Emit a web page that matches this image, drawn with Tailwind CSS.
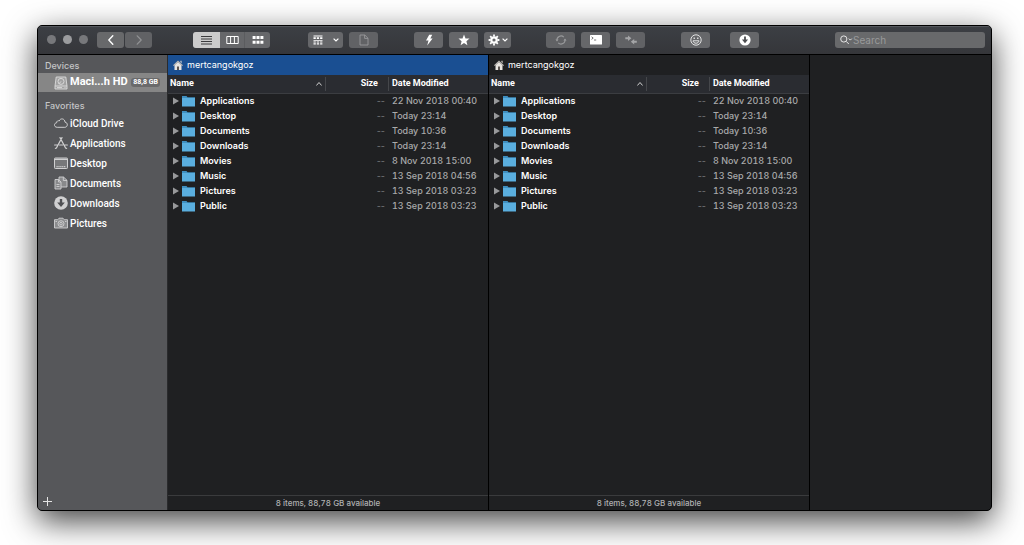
<!DOCTYPE html>
<html lang="en">
<head>
    <meta charset="UTF-8">
    <meta name="viewport" content="width=device-width, initial-scale=1.0">
    <title>mertcangokgoz</title>
    <script src="https://cdn.jsdelivr.net/npm/@tailwindcss/browser@4"></script>
</head>
<body class="flex h-screen overflow-hidden bg-white pt-[25px] pr-8 pb-[34px] pl-[37px] font-['Inter',sans-serif] text-[9px] text-white">
    <div class="flex min-w-0 flex-1 flex-col overflow-hidden rounded-[5px] border border-black bg-[#1f2022] shadow-[0_10px_32px_rgba(0,0,0,0.75)]">

        <!-- Toolbar -->
        <header class="flex h-7 shrink-0 items-center border-t border-[#55585d] bg-linear-to-b from-[#3c3f44] to-[#35363a] pr-1.5 pb-0.5 pl-[9px]">
            <div class="flex gap-[7px]">
                <button aria-label="Close" class="size-[9px] rounded-full bg-[#77787b]"></button>
                <button aria-label="Minimize" class="size-[9px] rounded-full bg-[#9b9c9e]"></button>
                <button aria-label="Zoom" class="size-[9px] rounded-full bg-[#77787b]"></button>
            </div>

            <div class="ml-[9px] flex gap-px">
                <button aria-label="Back" class="flex h-4 w-[27px] items-center justify-center rounded-[3px] bg-[#68696b]">
                    <svg class="size-3" viewBox="0 0 12 12" fill="none" stroke="#fff" stroke-width="1.4" stroke-linecap="round" stroke-linejoin="round"><path d="M7.8 1.8 3.8 6l4 4.2"/></svg>
                </button>
                <button aria-label="Forward" class="flex h-4 w-[27px] items-center justify-center rounded-[3px] bg-[#616265]">
                    <svg class="size-3" viewBox="0 0 12 12" fill="none" stroke="#929395" stroke-width="1.2" stroke-linecap="round" stroke-linejoin="round"><path d="m4.2 1.8 4 4.2-4 4.2"/></svg>
                </button>
            </div>

            <!-- View modes -->
            <div class="ml-[41px] flex h-4 overflow-hidden rounded-[3px] bg-[#66676a]">
                <button aria-label="List view" class="flex w-[27px] items-center justify-center bg-[#cbcbcb]">
                    <svg class="h-3 w-[13px]" viewBox="0 0 13 12" stroke="#3b3b3d" stroke-width="1"><path d="M1 2.5h11M1 5h11M1 7.5h11M1 10h11"/></svg>
                </button>
                <button aria-label="Column view" class="flex w-[25px] items-center justify-center border-r border-[#5b5c5f]">
                    <svg class="h-3 w-[13px]" viewBox="0 0 13 12" fill="none" stroke="#fff" stroke-width="1"><path d="M.8 2.5h11.4v7H.8zM4.6 2.5v7M8.4 2.5v7"/></svg>
                </button>
                <button aria-label="Icon view" class="flex w-[25px] items-center justify-center">
                    <svg class="h-3 w-3" viewBox="0 0 12 12" fill="#fff"><path d="M.6 2h3v3h-3zM4.5 2h3v3h-3zM8.4 2h3v3h-3zM.6 6.8h3v3h-3zM4.5 6.8h3v3h-3zM8.4 6.8h3v3h-3z"/></svg>
                </button>
            </div>

            <div class="ml-[38px] flex gap-1.5">
                <button aria-label="Arrange by" class="flex h-4 w-[35px] items-center justify-between rounded-[3px] bg-[#66676a] pr-1 pl-[5px]">
                    <svg class="h-3 w-2.5" viewBox="0 0 10 12" fill="#fff"><path d="M.5 1.5h9v.9h-9zM.5 3.3h2.3v1.8H.5zM3.8 3.3h2.3v1.8H3.8zM7.1 3.3h2.3v1.8H7.1zM.5 6h9v.7h-9zM.5 7.5h2.3v1H.5zM3.8 7.5h2.3v1H3.8zM7.1 7.5h2.3v1H7.1zM.5 9.3h2.3v1.2H.5zM3.8 9.3h2.3v1.2H3.8zM7.1 9.3h2.3v1.2H7.1z"/></svg>
                    <svg class="size-1.5" viewBox="0 0 6 6" fill="none" stroke="#fff" stroke-width="1.2"><path d="m.6 1.6 2.4 2.4 2.4-2.4"/></svg>
                </button>
                <button aria-label="New file" class="flex h-4 w-[29px] items-center justify-center rounded-[3px] bg-[#616265]">
                    <svg class="size-3" viewBox="0 0 12 12" fill="none" stroke="#98999b" stroke-width=".9"><path d="M2 1h4.8L10 4.2V11H2zM6.6 1v3.4H10"/></svg>
                </button>
            </div>

            <div class="ml-9 flex gap-1.5">
                <button aria-label="Quick action" class="flex h-4 w-[29px] items-center justify-center rounded-[3px] bg-[#66676a]">
                    <svg class="size-3" viewBox="0 0 12 12" fill="#fff"><path d="M6.2.8h3L7.3 4.6h2.3L4.2 11.4l1.3-4.8H3z"/></svg>
                </button>
                <button aria-label="Favorites" class="flex h-4 w-[29px] items-center justify-center rounded-[3px] bg-[#66676a]">
                    <svg class="size-3" viewBox="0 0 12 12" fill="#fff"><path d="M6 .6l1.5 3.8 4 .2-3.1 2.6 1 4L6 9l-3.4 2.2 1-4L.5 4.6l4-.2z"/></svg>
                </button>
                <button aria-label="Actions" class="flex h-4 w-[27px] items-center justify-between rounded-[3px] bg-[#66676a] pr-[3px] pl-1">
                    <svg class="size-3" viewBox="0 0 12 12" fill="none" stroke="#fff"><circle cx="6" cy="6" r="2.7" stroke-width="2.2"/><path d="M6 .6v2M6 9.4v2M.6 6h2M9.4 6h2M2.2 2.2l1.4 1.4M8.4 8.4l1.4 1.4M2.2 9.8l1.4-1.4M8.4 3.6l1.4-1.4" stroke-width="1.8"/></svg>
                    <svg class="size-1.5" viewBox="0 0 6 6" fill="none" stroke="#fff" stroke-width="1.2"><path d="m.6 1.6 2.4 2.4 2.4-2.4"/></svg>
                </button>
            </div>

            <div class="ml-[35px] flex gap-1.5">
                <button aria-label="Sync" class="flex h-4 w-[29px] items-center justify-center rounded-[3px] bg-[#616265]">
                    <svg class="size-3" viewBox="0 0 12 12" fill="none" stroke="#98999b" stroke-width="1.2"><path d="M2 6.6A4 4 0 0 1 8.8 3.2M10 5.4A4 4 0 0 1 3.2 8.8"/><path d="M.4 5.6h3.2L2 7.600zM8.400 6.4h3.200L10 4.4z" fill="#98999b" stroke="none"/></svg>
                </button>
                <button aria-label="Terminal" class="flex h-4 w-[29px] items-center justify-center rounded-[3px] bg-[#66676a]">
                    <svg class="size-3" viewBox="0 0 12 12" fill="none"><rect y="1" width="12" height="9.5" rx=".6" fill="#fff"/><path d="m1.5 2.8 1.700 1.300-1.700 1.300M4 6h2.200" stroke="#555" stroke-width=".8"/></svg>
                </button>
                <button aria-label="Merge" class="flex h-4 w-[29px] items-center justify-center rounded-[3px] bg-[#616265]">
                    <svg class="size-3" viewBox="0 0 12 12" fill="#a4a5a7"><path d="M.3 3.200h2.700V1.400L6.400 4.200 3 7V5.200H.3zM11.800 6.800H9.200V5L5.800 7.800l3.400 2.800V8.800h2.600z"/></svg>
                </button>
            </div>

            <button aria-label="Emoji" class="ml-9 flex h-4 w-[29px] items-center justify-center rounded-[3px] bg-[#66676a]">
                <svg class="size-3" viewBox="0 0 12 12" fill="none" stroke="#f0f0f0" stroke-width=".9"><circle cx="6" cy="6" r="5.2"/><path d="M3 6.8h6C8.7 8.5 7.5 9.2 6 9.2S3.3 8.5 3 6.8z"/><path d="M4.2 3.4v1.6M7.8 3.4v1.6" stroke-width="1.2"/></svg>
            </button>
            <button aria-label="Downloads" class="ml-5 flex h-4 w-[29px] items-center justify-center rounded-[3px] bg-[#66676a]">
                <svg class="size-3" viewBox="0 0 12 12"><circle cx="6" cy="6" r="5.6" fill="#fff"/><path d="M5.1 2.6h1.8v3h2.2L6 9.2 2.9 5.6h2.2z" fill="#4d4e51"/></svg>
            </button>

            <label class="ml-auto flex h-4 w-[150px] items-center rounded-[3px] bg-[#68696b] pl-[5px]">
                <svg class="h-3 w-[13px] shrink-0" viewBox="0 0 13 12" fill="none" stroke="#e4e4e4"><circle cx="3.8" cy="5" r="3.1"/><path d="m6.2 7.4 2.600 2.600"/><path d="m8.8 4.6 1.500 1.500 1.500-1.500"/></svg>
                <input type="search" aria-label="Search" placeholder="Search" class="w-full min-w-0 bg-transparent text-[10px] leading-4 outline-none placeholder:text-[#98999a]">
            </label>
        </header>

        <div class="flex min-h-0 flex-1 border-t border-black">
            <!-- Sidebar -->
            <aside class="flex w-[130px] shrink-0 flex-col border-r border-[#2a2b2d] bg-[#56575a] font-['Roboto',sans-serif] font-medium">
                <h2 class="px-[7px] pt-1 font-['Inter',sans-serif] leading-[14px] text-[#c4c5c6]">Devices</h2>
                <a href="#" class="flex h-[19px] items-center bg-[#868686] pr-[7px] pl-4 text-[11px] font-bold">
                    <svg class="mr-0.5 size-3.5 shrink-0" viewBox="0 0 14 14" fill="none" stroke="#dcdcdc" stroke-width=".9"><path d="M2.200 1h9.600l1.200 9v3H1v-3z" fill="#a2a2a2"/><path d="M1 10h12"/><circle cx="7" cy="5.400" r="3"/><path d="m7 5.400-2 2.400M3 11.600h5M10.500 11.600h1"/></svg>
                    <span>Maci...h HD</span>
                    <span class="ml-auto rounded-[3px] bg-[#6a6a6b] px-0.5 text-[7px] leading-[9px] whitespace-nowrap">88,8 GB</span>
                </a>
                <h2 class="px-[7px] pt-[7px] font-['Inter',sans-serif] leading-[14px] text-[#c4c5c6]">Favorites</h2>
                <nav class="text-[10px]">
                    <a href="#" class="flex h-5 items-center gap-0.5 pl-4">
                        <svg class="size-3.5" viewBox="0 0 14 14" fill="none" stroke="#d0d0d1" stroke-width="1"><path d="M3.200 11.300C-.4 11.300-.2 7 2.600 6.800 2.500 5 4.300 4.300 5.200 5 6.300 1.700 11 2.500 11 6.200c3.200.2 3 5.100-.2 5.100z"/></svg>
                        iCloud Drive
                    </a>
                    <a href="#" class="flex h-5 items-center gap-0.5 pl-4">
                        <svg class="size-3.5" viewBox="0 0 14 14" fill="none" stroke="#d0d0d1" stroke-width="1.200" stroke-linecap="round"><path d="M6 1.600 11.600 12M8 1.600 2.400 12M.6 9h3M5.600 9h3M11 9h2.400M11.600 12l1 .4M2.400 12l-1 .4"/></svg>
                        Applications
                    </a>
                    <a href="#" class="flex h-5 items-center gap-0.5 pl-4">
                        <svg class="size-3.5" viewBox="0 0 14 14" fill="none" stroke="#d0d0d1"><rect x=".5" y="2" width="13" height="10.500" rx=".8" fill="#77787a"/><path d="M1 3.300h12" stroke-width="1.200"/><path d="M2.500 10.700h9" stroke-width="1.300" stroke-dasharray="1.200 .7"/></svg>
                        Desktop
                    </a>
                    <a href="#" class="flex h-5 items-center gap-0.5 pl-4">
                        <svg class="size-3.5" viewBox="0 0 14 14" fill="#88898b" stroke="#d0d0d1" stroke-width=".9"><path d="M5 1h4.500L13 4.300V11H5z"/><path d="M9.300 1v3.500H13" fill="none"/><path d="M1 3.500h3.500L7 6v7H1z"/><path d="M4.500 3.500V6H7M2.500 8.500h3M2.500 10.500h3" fill="none"/></svg>
                        Documents
                    </a>
                    <a href="#" class="flex h-5 items-center gap-0.5 pl-4">
                        <svg class="size-3.5" viewBox="0 0 14 14"><circle cx="7" cy="7" r="6.800" fill="#d0d0d1"/><path d="M5.800 3h2.400v3.600h2.600L7 11 3.200 6.600h2.600z" fill="#505154"/></svg>
                        Downloads
                    </a>
                    <a href="#" class="flex h-5 items-center gap-0.5 pl-4">
                        <svg class="size-3.5" viewBox="0 0 14 14" fill="none" stroke="#d0d0d1" stroke-width=".9"><path d="M.5 3.700h3.300L5 2.200h4l1.200 1.500h3.300v8.300H.5z" fill="#8b8c8e"/><circle cx="7" cy="7.700" r="3"/><circle cx="7" cy="7.700" r="1.300"/><path d="M1.500 5.500H3M11 5.500h1.500"/></svg>
                        Pictures
                    </a>
                </nav>
                <button aria-label="Add" class="mt-auto mb-1 ml-1 size-[10px]">
                    <svg class="size-full" viewBox="0 0 10 10" stroke="#e4e4e4"><path d="M5.500 1v9M1 5.500h9"/></svg>
                </button>
            </aside>

            <!-- Panes -->
            <main id="panes" class="grid min-w-0 flex-1 grid-cols-[39fr_39fr_22fr]"></main>
        </div>
    </div>

    <script>
        const folders = [
            ['Applications', '22 Nov 2018 00:40'],
            ['Desktop', 'Today 23:14'],
            ['Documents', 'Today 10:36'],
            ['Downloads', 'Today 23:14'],
            ['Movies', '8 Nov 2018 15:00'],
            ['Music', '13 Sep 2018 04:56'],
            ['Pictures', '13 Sep 2018 03:23'],
            ['Public', '13 Sep 2018 03:23'],
        ];

        // One table row per folder
        const rows = folders.map(([name, date]) => `
            <tr class="h-[15px]">
                <td>
                    <div class="flex items-center pl-[5px] font-semibold">
                        <svg class="mr-[3px] h-2 w-1.5" viewBox="0 0 6 8" fill="#98999b"><path d="M0 .5 6 4 0 7.5z"/></svg>
                        <svg class="mr-[5px] h-3 w-[13px]" viewBox="0 0 13 12"><path d="M0 1h4.5l1 1.200H13V11H0z" fill="#3f8fc0"/><path d="M0 3h13v8.500H0z" fill="#5aaede"/></svg>
                        ${name}
                    </div>
                </td>
                <td class="pr-1 text-right text-[#77787a]">--</td>
                <td class="pl-[3px] font-medium whitespace-nowrap text-[#a9aaab] tabular-nums">${date}</td>
            </tr>`).join('');

        const pane = (barColor) => `
            <section class="flex min-w-0 flex-col border-r border-black">
                <div class="flex h-5 shrink-0 items-center gap-1 pb-px pl-[5px] ${barColor}">
                    <svg class="size-2.5" viewBox="0 0 10 10"><path d="M1.500 5v5h7V5L5 2z" fill="#e8e4df"/><path d="M0 5.200 5 .6l5 4.600-.8.7L5 2.200.8 5.900z" fill="#b9b6b2"/><path d="M7.400.8h1.200v2.400L7.400 2z" fill="#d8d5d0"/><path d="M4 6.500h2V10H4z" fill="#5b5450"/></svg>
                    mertcangokgoz
                </div>
                <table class="w-full table-fixed">
                    <colgroup><col><col class="w-[63px]"><col class="w-[99px]"></colgroup>
                    <thead class="border-b border-[#3b3d41] bg-[#2a2c31] text-left font-['Roboto',sans-serif]">
                        <tr class="h-[18px]">
                            <th class="pl-0.5 font-bold">
                                <div class="flex items-center justify-between border-r border-[#45474b] pr-[3px]">
                                    Name
                                    <svg class="size-1.5" viewBox="0 0 6 6" fill="none" stroke="#d0d0d0"><path d="m.4 4.5 2.600-3 2.600 3"/></svg>
                                </div>
                            </th>
                            <th class="font-bold"><div class="border-r border-[#45474b] pr-2.5 text-right">Size</div></th>
                            <th class="pl-[3px] font-bold">Date Modified</th>
                        </tr>
                    </thead>
                    <tbody>${rows}</tbody>
                </table>
                <footer class="mt-auto border-t border-[#3a3b3d] text-center text-[8px] leading-[14px] font-medium text-[#b0b1b2] tabular-nums">8 items, 88,78 GB available</footer>
            </section>`;

        document.getElementById('panes').innerHTML = pane('bg-[#1a4f92]') + pane('bg-[#1f2022]') + '<section></section>';
    </script>
</body>
</html>
